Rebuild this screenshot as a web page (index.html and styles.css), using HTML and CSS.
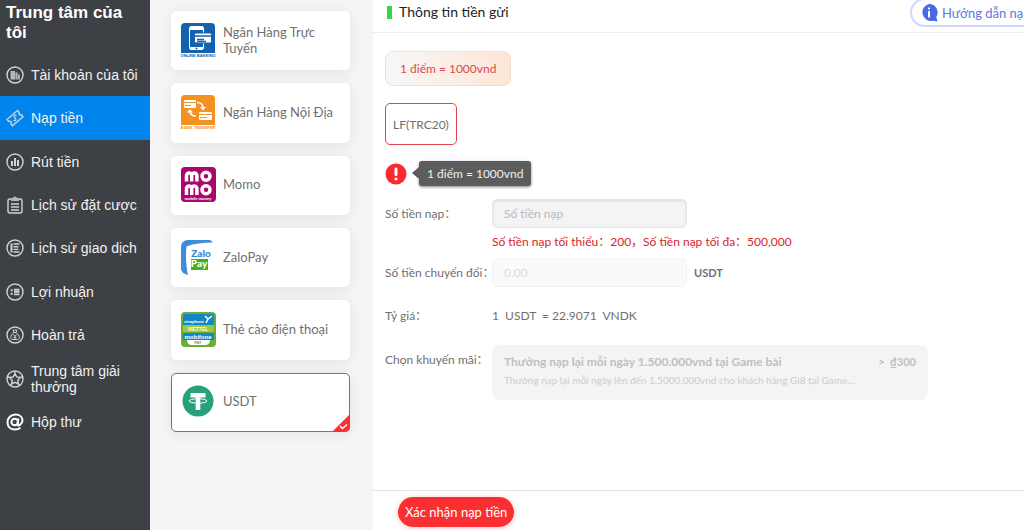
FILE: index.html
```
<!DOCTYPE html>
<html lang="vi">
<head>
    <meta charset="UTF-8">
    <title>Nạp tiền</title>
    <link rel="stylesheet" href="styles.css">
</head>
<body>
<div class="page">
    <aside class="sidebar">
        <h1>Trung tâm của tôi</h1>
        <nav>
            <a href="#">
                <svg viewBox="0 0 18 18"><circle cx="9" cy="9" r="8"/><path class="fill" d="M4.500 5h4.500v8.500H4.500zM9.400 6.500h2.200v7H9.400zM12 8.500h1.800v5H12z"/></svg>
                <span>Tài khoản của tôi</span>
            </a>
            <a href="#" class="active">
                <svg viewBox="0 0 18 18"><path d="M1 10.500 11.500 1.500l1.800 2a1.500 1.500 0 0 0 2 2.200l1.700 2L6.500 16.800l-1.700-2a1.500 1.500 0 0 0-2-2.300z"/><path d="M10.500 6.500c-1.500-.8-3 .3-2.200 1.700l1.400 1.600c.8 1.500-.8 2.500-2.200 1.600"/></svg>
                <span>Nạp tiền</span>
            </a>
            <a href="#">
                <svg viewBox="0 0 18 18"><circle cx="9" cy="9" r="8"/><path class="bars" d="M6 8v5M9 5v8M12 7v6"/></svg>
                <span>Rút tiền</span>
            </a>
            <a href="#">
                <svg viewBox="0 0 18 18"><rect x="2" y="3" width="14" height="14" rx="2"/><path class="fill" d="M5 5V2.500h2a2 2 0 0 1 4 0h2V5z"/><path d="M5 8h8M5 11h8M5 14h8"/></svg>
                <span>Lịch sử đặt cược</span>
            </a>
            <a href="#">
                <svg viewBox="0 0 18 18"><circle cx="9" cy="9" r="8"/><path class="bars" d="M5.500 4.500v9"/><path d="M7.500 5h6M7.500 7.700h5M7.500 10.400h5M7.500 13h6"/></svg>
                <span>Lịch sử giao dịch</span>
            </a>
            <a href="#">
                <svg viewBox="0 0 18 18"><circle cx="9" cy="9" r="8"/><path class="bars" d="M4.700 7.200h2M4.700 10.800h2"/><path d="M8 6.500h5.500M8 8.200h5.500M8 9.900h5.500M8 11.600h5.500"/></svg>
                <span>Lợi nhuận</span>
            </a>
            <a href="#">
                <svg viewBox="0 0 18 18"><circle cx="9" cy="9" r="8"/><path class="thin" d="M7 4h4l-1 2.500H8zM8 6.500c-2 1.200-3.300 3.500-3.300 5.200 0 1.300.8 1.800 1.800 1.800h5c1 0 1.800-.5 1.800-1.800 0-1.700-1.300-4-3.300-5.200M7.500 8.500 9 10.500l1.500-2M9 10.500V13M7.500 11.300h3"/></svg>
                <span>Hoàn trả</span>
            </a>
            <a href="#">
                <svg viewBox="0 0 18 18"><circle cx="9" cy="9" r="8"/><path d="m9 3.500 1.700 3.400 3.700.6-2.600 2.700.6 3.800L9 12.300 5.600 14l.6-3.800-2.600-2.700 3.700-.6zM9 1v2.500M1.500 6.800l2.100.7M16.500 6.800l-2.100.7M4.200 15.500 5.600 14M13.800 15.500 12.400 14"/></svg>
                <span>Trung tâm giải thưởng</span>
            </a>
            <a href="#">
                <svg viewBox="0 0 18 18"><g class="at"><circle cx="8.700" cy="9" r="3.300"/><path d="m12.500 5.500-1 5.300c-.3 2.200 1.500 2 2.600 1 1.200-1.100 2.400-2.500 2.400-4.200C16.500 4 13.500 1.500 9.500 1.500 5 1.500 1.500 5 1.500 9.200c0 4.300 3 7.300 7.500 7.300 2.300 0 4.200-.7 5.500-1.800"/></g></svg>
                <span>Hộp thư</span>
            </a>
        </nav>
    </aside>

    <section class="methods">
        <button type="button" class="method">
            <svg viewBox="0 0 36 36">
                <path fill="#1262ae" d="M5 1h26a4 4 0 0 1 4 4v26H1V5a4 4 0 0 1 4-4z"/>
                <rect x="9.500" y="4.500" width="14" height="23" rx="2" fill="#1262ae" stroke="#fff"/>
                <path fill="#fff" d="M9.500 8V6a2 2 0 0 1 2-2h10a2 2 0 0 1 2 2v2zM9.500 25h14v1a2 2 0 0 1-2 2h-10a2 2 0 0 1-2-2z"/>
                <rect x="14.500" y="11" width="17" height="10" rx="1.500" fill="#fff" stroke="#1262ae"/>
                <path stroke="#1262ae" stroke-width="1.500" d="M15 14h16M17 17.500h7M17 19.500h9"/>
                <circle cx="16.500" cy="26.500" r="1" fill="#1262ae"/>
                <text x="18" y="35" class="tiny" fill="#1262ae">ONLINE BANKING</text>
            </svg>
            <span>Ngân Hàng Trực Tuyến</span>
        </button>
        <button type="button" class="method">
            <svg viewBox="0 0 36 36">
                <path fill="#f39223" d="M5 1h26a4 4 0 0 1 4 4v26H1V5a4 4 0 0 1 4-4z"/>
                <rect x="4" y="6" width="12" height="8" rx="1" fill="#fff"/>
                <rect x="19" y="18" width="13" height="8" rx="1" fill="#fff"/>
                <path stroke="#f39223" d="M4 8.500h12M5 11.500h6M19 20.500h13M20 23.500h7"/>
                <path fill="none" stroke="#fff" stroke-width="1.500" d="M17 8.500c4 0 6 2 6 6M16 22c-4 0-6-2-6-5"/>
                <path fill="#fff" d="M20 13h6l-3 3.500zM7 18.500h6L10 15z"/>
                <text x="18" y="35" class="tiny" fill="#f39223">BANK TRANSFER</text>
            </svg>
            <span>Ngân Hàng Nội Địa</span>
        </button>
        <button type="button" class="method">
            <svg viewBox="0 0 36 36">
                <rect x="1" y="1" width="35" height="35" rx="4" fill="#a9076b"/>
                <g fill="none" stroke="#fff" stroke-width="3.500">
                    <path d="M6.500 15.500V9.500a2.600 2.600 0 0 1 5.200 0v6M11.700 15.500V9.500a2.600 2.600 0 0 1 5.200 0v6M6.500 29v-6.500a2.600 2.600 0 0 1 5.200 0V29M11.700 29v-6.500a2.600 2.600 0 0 1 5.200 0V29"/>
                    <circle cx="26" cy="10.200" r="4"/>
                    <circle cx="26" cy="23.800" r="4"/>
                </g>
                <text x="18" y="34" class="tiny" fill="#fff">mobile money</text>
            </svg>
            <span>Momo</span>
        </button>
        <button type="button" class="method">
            <svg viewBox="0 0 36 36">
                <path fill="#3c8ddb" d="M8 1h21c2 0 3 1 3.500 2.500C23 3.500 14 4.500 6.500 7.500 5.500 16 6 27 8 36c-4-1-7-3-7-7V8c0-4 3-7 7-7z"/>
                <text x="21" y="18" class="zalo" fill="#2d87d8">Zalo</text>
                <rect x="11" y="20" width="17" height="11" fill="#3db41b"/>
                <text x="19" y="28" class="zalo" fill="#fff">Pay</text>
            </svg>
            <span>ZaloPay</span>
        </button>
        <button type="button" class="method">
            <svg viewBox="0 0 36 36">
                <rect x="1" y="1" width="35" height="35" rx="4" fill="#6aae35"/>
                <path fill="#1485c7" d="M3 5a2 2 0 0 1 2-2h27a2 2 0 0 1 2 2v9H3zM3 22h31v7H3z"/>
                <path fill="#9bc93e" d="M3 14h31v7H3z"/>
                <path fill="#fff" d="M7 29h23c0 3-2 5-5 5H12c-3 0-5-2-5-5z"/>
                <path fill="none" stroke="#fff" stroke-width="1.500" d="M25 5l3 3 4-3M28 8l-2 4"/>
                <text x="14" y="12" class="tiny" fill="#fff">vinaphone</text>
                <text x="18" y="20" class="brand" fill="#fff">VIETTEL</text>
                <text x="18" y="27.500" class="brand large" fill="#fff">mobifone</text>
                <text x="18" y="33" class="tiny" fill="#6aae35">PAY</text>
            </svg>
            <span>Thẻ cào điện thoại</span>
        </button>
        <button type="button" class="method selected">
            <svg viewBox="0 0 36 36">
                <circle cx="18" cy="18" r="15.500" fill="#26a17b"/>
                <path fill="#fff" d="M10.500 10h15v4.500h-5.200V27h-4.600V14.500h-5.200z"/>
                <ellipse cx="18" cy="18" rx="9" ry="2.200" fill="none" stroke="#fff"/>
            </svg>
            <span>USDT</span>
            <svg class="tick" viewBox="0 0 18 18"><path fill="#fb3034" d="M18 0v18H0z"/><path fill="none" stroke="#fff" stroke-width="1.500" d="m8 12 2.500 2.500 4.500-4"/></svg>
        </button>
    </section>

    <main>
        <header>
            <h2>Thông tin tiền gửi</h2>
            <button type="button" class="guide">
                <svg viewBox="0 0 18 18"><path fill="#4a69e2" d="M9 0a8.500 8.500 0 0 1 7.300 13l1.200 4.500-4.500-.8A8.500 8.500 0 1 1 9 0z"/><path stroke="#fff" stroke-width="2" d="M9 3.500v2M9 7v6.500"/></svg>
                <span>Hướng dẫn nạp tiền</span>
            </button>
        </header>

        <form id="depositForm">
            <div class="rate-chip">1 điểm = 1000vnd</div>
            <button type="button" class="channel">LF(TRC20)</button>
            <div class="notice">
                <svg viewBox="0 0 22 22"><circle cx="11" cy="11" r="10.500" fill="#f92b2f"/><path stroke="#fff" stroke-width="3" stroke-linecap="round" d="M11 6v5.500M11 16v.1"/></svg>
                <span class="bubble">1 điểm = 1000vnd</span>
            </div>

            <div class="row amount">
                <label for="amount">Số tiền nạp：</label>
                <div>
                    <input id="amount" type="text" placeholder="Số tiền nạp">
                    <p class="limit">Số tiền nạp tối thiểu：200，Số tiền nạp tối đa：500,000</p>
                </div>
            </div>
            <div class="row converted">
                <label for="converted">Số tiền chuyển đổi：</label>
                <input id="converted" type="text" placeholder="0.00" disabled>
                <strong>USDT</strong>
            </div>
            <div class="row rate">
                <span class="label">Tỷ giá：</span>
                <span class="value">1&nbsp; USDT&nbsp; = 22.9071&nbsp; VNDK</span>
            </div>
            <div class="row promotion">
                <span class="label">Chọn khuyến mãi：</span>
                <button type="button" class="promo" disabled>
                    <span class="promo-title"><b>Thưởng nạp lại mỗi ngày 1.500.000vnd tại Game bài</b><b class="bonus">&gt;&nbsp; ₫300</b></span>
                    <span class="promo-text">Thưởng nạp lại mỗi ngày lên đến 1.5000.000vnd cho khách hàng Gi8 tại Game…</span>
                </button>
            </div>
        </form>

        <footer>
            <button type="submit" form="depositForm" class="confirm">Xác nhận nạp tiền</button>
        </footer>
    </main>
</div>
</body>
</html>
```

FILE: styles.css
```
* {
    box-sizing: border-box;
}

body {
    margin: 0;
    font-family: Lato, "Noto Sans", "Noto Sans CJK SC", sans-serif;
    font-size: 13px;
    color: #707070;
    overflow: hidden;
}

button,
input {
    font: inherit;
    color: inherit;
}

button {
    cursor: pointer;
}

h1, h2, p {
    margin: 0;
}

.page {
    display: flex;
    min-height: 100vh;
    background: #f5f5f5;
}

/* left menu */
.sidebar {
    flex: 0 0 150px;
    background: #3d4044;
    color: #f2f2f2;
    font-family: "Liberation Sans", Arial, sans-serif;
}

.sidebar h1 {
    padding: 3px 6px 10px;
    font-size: 17px;
    line-height: 20px;
    color: #fff;
}

.sidebar nav {
    display: grid;
    grid-auto-rows: 1fr;
    min-height: 391px;
}

.sidebar a {
    display: flex;
    align-items: center;
    gap: 7px;
    padding-left: 6px;
    font-size: 14px;
    line-height: 16px;
    color: inherit;
    text-decoration: none;
}

.sidebar a.active {
    background: #0084ee;
}

.sidebar svg {
    flex: none;
    width: 18px;
    height: 18px;
    fill: none;
    stroke: #d0d2d4;
    stroke-width: 1.4;
}

.sidebar svg .fill {
    fill: #b4b6b9;
    stroke: none;
}

.sidebar svg .bars {
    stroke-width: 2;
}

.sidebar svg .thin {
    stroke-width: 1;
}

.sidebar svg .at {
    stroke: #fff;
    stroke-width: 2;
}

/* payment methods */
.methods {
    flex: 0 0 223px;
    display: grid;
    grid-auto-rows: 1fr;
    gap: 13px;
    align-self: flex-start;
    min-height: 443px;
    padding: 11px 23px 11px 21px;
}

.method {
    position: relative;
    display: flex;
    align-items: center;
    gap: 7px;
    padding: 0 10px 2px 8px;
    border: 1px solid #fff;
    border-radius: 5px;
    background: #fff;
    box-shadow: 0 2px 14px rgba(0, 0, 0, 0.08);
    line-height: 16px;
    text-align: left;
}

.method > svg:first-child {
    flex: none;
    width: 36px;
    height: 36px;
}

.method.selected {
    border-color: #e0454d;
}

.method .tick {
    position: absolute;
    right: -1px;
    bottom: -1px;
    width: 18px;
    height: 18px;
    border-bottom-right-radius: 5px;
}

.tiny,
.brand,
.zalo {
    font-family: "Liberation Sans", Arial, sans-serif;
    font-weight: bold;
    text-anchor: middle;
}

.tiny {
    font-size: 4px;
}

.brand {
    font-size: 5px;
}

.brand.large {
    font-size: 6px;
}

.zalo {
    font-family: Lato, sans-serif;
    font-weight: 900;
    font-size: 10px;
}

/* deposit form */
main {
    flex: 1;
    min-width: 0;
    display: flex;
    flex-direction: column;
    background: #fff;
}

header {
    display: flex;
    justify-content: space-between;
    align-items: flex-start;
    height: 33px;
    margin-right: -48px;
    padding-left: 14px;
    border-bottom: 1px solid #eee;
}

header h2 {
    display: flex;
    align-items: center;
    gap: 7px;
    font-size: 14px;
    font-weight: normal;
    line-height: 24px;
    color: #222;
}

header h2::before {
    content: "";
    width: 5px;
    height: 13px;
    background: #2fd945;
}

.guide {
    display: flex;
    align-items: center;
    gap: 4px;
    height: 29px;
    margin-top: -2px;
    padding: 0 14px 0 8px;
    border: 2px solid #d0d7f8;
    border-radius: 15px;
    background: #fff;
    color: #5f78da;
    white-space: nowrap;
}

.guide svg {
    width: 18px;
    height: 18px;
}

form {
    flex: 1;
    display: flex;
    flex-direction: column;
    align-items: flex-start;
    padding: 18px 12px;
}

.rate-chip {
    padding: 0 14px;
    border: 1px solid #f8dcd4;
    border-radius: 8px;
    background: linear-gradient(90deg, #f8f7f8, #fde6d6);
    font-size: 12px;
    line-height: 33px;
    color: #e04850;
}

.channel {
    height: 42px;
    margin-top: 17px;
    padding: 0 7px;
    border: 1px solid #e0454d;
    border-radius: 5px;
    background: #fff;
    font-size: 12px;
}

.notice {
    display: flex;
    align-items: center;
    gap: 12px;
    margin-top: 16px;
}

.notice svg {
    width: 22px;
    height: 22px;
}

.bubble {
    position: relative;
    padding: 0 8px;
    border-radius: 3px;
    background: #5c5c5c;
    box-shadow: 0 1px 3px rgba(0, 0, 0, 0.5);
    font-size: 12px;
    line-height: 25px;
    color: #eee;
}

.bubble::before {
    content: "";
    position: absolute;
    left: -7px;
    top: 6px;
    border: solid transparent;
    border-width: 6px 7px 6px 0;
    border-right-color: #5c5c5c;
}

.row {
    display: flex;
    align-items: center;
    width: 100%;
    font-size: 12px;
}

.row label,
.row .label {
    flex: 0 0 107px;
    min-width: 0;
    line-height: 29px;
    white-space: nowrap;
}

.row input {
    width: 195px;
    height: 29px;
    padding: 0 11px;
    border: 1px solid #e6e6e6;
    border-radius: 5px;
    background: #f4f4f4;
    box-shadow: inset 0 1px 3px rgba(0, 0, 0, 0.1);
}

.row input::placeholder {
    color: #b9b9b9;
}

.row input:disabled {
    border-color: #f2f2f2;
    background: #fafafa;
    box-shadow: none;
}

.row input:disabled::placeholder {
    color: #ddd;
}

.row.amount {
    align-items: flex-start;
    margin-top: 13px;
}

.limit {
    line-height: 28px;
    white-space: nowrap;
    color: #d8232a;
}

.converted {
    margin-top: 2px;
}

.converted strong {
    margin-left: 7px;
    font-size: 11px;
}

.rate {
    margin-top: 14px;
}

.row.promotion {
    align-items: flex-start;
    margin-top: 15px;
}

.promo {
    flex: 0 1 436px;
    min-width: 0;
    height: 55px;
    padding: 0 12px 4px;
    border: 0;
    border-radius: 8px;
    background: #f4f4f4;
    color: #ccc;
    text-align: left;
}

.promo-title {
    display: flex;
    justify-content: space-between;
    line-height: 18px;
    color: #bfbfbf;
}

.promo-text {
    display: block;
    font-size: 10px;
    line-height: 18px;
}

.bonus {
    font-size: 11px;
}

footer {
    height: 40px;
    padding: 6px 25px;
    border-top: 1px solid #e4e4e4;
}

.confirm {
    height: 30px;
    padding: 0 7px;
    border: 0;
    border-radius: 15px;
    background: #fb2f31;
    box-shadow: 0 1px 5px rgba(251, 47, 49, 0.3);
    color: #fff;
}
```
